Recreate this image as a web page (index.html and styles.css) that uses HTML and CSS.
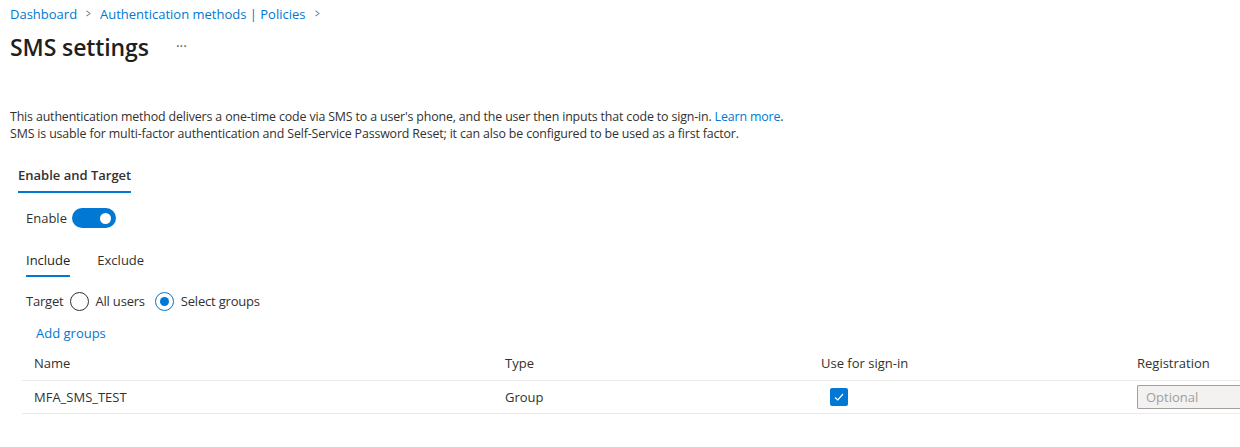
FILE: index.html
```html
<!DOCTYPE html>
<html lang="en">
<head>
  <meta charset="UTF-8">
  <title>SMS settings</title>
  <link rel="stylesheet" href="styles.css">
</head>
<body>
  <div class="page">
    <nav class="crumbs">
      <a href="#">Dashboard</a>
      <span class="chev">&gt;</span>
      <a href="#">Authentication methods | Policies</a>
      <span class="chev">&gt;</span>
    </nav>

    <div class="title-row">
      <h1>SMS settings</h1>
      <span class="more">&middot;&middot;&middot;</span>
    </div>

    <p class="desc">
      This authentication method delivers a one-time code via SMS to a user's phone, and the user then inputs that code to sign-in. <a href="#">Learn more</a>.<br>
      SMS is usable for multi-factor authentication and Self-Service Password Reset; it can also be configured to be used as a first factor.
    </p>

    <div class="main-tabs">
      <span class="tab active">Enable and Target</span>
    </div>

    <div class="section">
      <div class="enable-row">
        <span>Enable</span>
        <span class="toggle"><span class="knob"></span></span>
      </div>

      <div class="sub-tabs">
        <span class="tab active">Include</span>
        <span class="tab">Exclude</span>
      </div>

      <div class="target-row">
        <span>Target</span>
        <label class="radio"><span class="dot"></span>All users</label>
        <label class="radio checked"><span class="dot"></span>Select groups</label>
      </div>

      <a class="add-link" href="#">Add groups</a>
    </div>

    <div class="grid">
      <div class="grid-row head">
        <div>Name</div>
        <div>Type</div>
        <div>Use for sign-in</div>
        <div>Registration</div>
      </div>
      <div class="grid-row">
        <div>MFA_SMS_TEST</div>
        <div>Group</div>
        <div><span class="check">
          <svg width="12" height="12" viewBox="0 0 12 12"><path d="M2 6.5 L4.8 9 L10 3" fill="none" stroke="#fff" stroke-width="1.2"/></svg>
        </span></div>
        <div><span class="select">Optional</span></div>
      </div>
    </div>
  </div>
</body>
</html>
```

FILE: styles.css
```css
body {
  margin: 0;
  font-family: "Open Sans", "Noto Sans", sans-serif;
  color: #323130;
  background: #fff;
  font-size: 13px;
}
a {
  color: #0078d4;
  text-decoration: none;
}
.page {
  padding: 0 0 0 10px;
  overflow: hidden;
}
.crumbs {
  display: flex;
  align-items: center;
  gap: 8px;
  height: 27px;
  font-size: 13px;
}
.crumbs .chev {
  color: #605e5c;
  font-size: 12px;
  transform: scaleX(0.7);
}
.title-row {
  display: flex;
  align-items: center;
  height: 40px;
}
h1 {
  margin: 0;
  font-size: 23px;
  font-weight: 600;
  color: #201f1e;
  letter-spacing: -0.1px;
}
.more {
  margin-left: 27px;
  font-size: 14px;
  color: #605e5c;
  position: relative;
  top: -2px;
}
.desc {
  margin: 41px 0 0;
  font-size: 12.4px;
  line-height: 17px;
  letter-spacing: -0.15px;
}
.main-tabs {
  margin-top: 24px;
  padding-left: 8px;
}
.tab {
  display: inline-block;
  font-size: 13px;
  padding-bottom: 6px;
  border-bottom: 2px solid transparent;
}
.tab.active {
  font-weight: 600;
  border-bottom-color: #0078d4;
}
.main-tabs .tab {
  padding-bottom: 7px;
}
.section {
  padding-left: 16px;
}
.enable-row {
  display: flex;
  align-items: center;
  gap: 5px;
  margin-top: 15px;
}
.toggle {
  display: flex;
  align-items: center;
  justify-content: flex-end;
  width: 44px;
  height: 20px;
  border-radius: 10px;
  background: #0078d4;
  box-sizing: border-box;
  padding-right: 5px;
}
.knob {
  width: 11px;
  height: 11px;
  border-radius: 50%;
  background: #fff;
}
.sub-tabs {
  display: flex;
  gap: 27px;
  margin-top: 23px;
}
.sub-tabs .tab.active {
  font-weight: 400;
  color: #201f1e;
}
.target-row {
  display: flex;
  align-items: center;
  margin-top: 14px;
  height: 20px;
  letter-spacing: -0.2px;
}
.radio {
  display: flex;
  align-items: center;
  gap: 7px;
  margin-left: 6px;
}
.radio + .radio {
  margin-left: 10px;
}
.dot {
  width: 19px;
  height: 19px;
  border: 1px solid #323130;
  border-radius: 50%;
  box-sizing: border-box;
  display: flex;
  align-items: center;
  justify-content: center;
}
.radio.checked .dot {
  border-color: #0078d4;
}
.radio.checked .dot::after {
  content: "";
  width: 9px;
  height: 9px;
  border-radius: 50%;
  background: #0078d4;
}
.add-link {
  display: block;
  margin: 13px 0 0 10px;
  font-size: 13px;
}
.grid {
  margin: 3px 0 0 12px;
}
.grid-row {
  display: grid;
  grid-template-columns: 471px 316px 316px 1fr;
  align-items: center;
  padding-left: 12px;
  height: 32px;
  border-bottom: 1px solid #edebe9;
}
.grid-row.head {
  height: 35px;
  color: #323130;
}
.grid-row.head div {
  font-weight: 500;
}
.check {
  display: flex;
  align-items: center;
  justify-content: center;
  width: 18px;
  height: 18px;
  margin-left: 9px;
  background: #0078d4;
  border-radius: 2px;
}
.select {
  display: block;
  height: 22px;
  line-height: 22px;
  border: 1px solid #a19f9d;
  border-right: none;
  border-radius: 2px 0 0 2px;
  background: #f3f2f1;
  color: #a19f9d;
  padding-left: 8px;
}
```
